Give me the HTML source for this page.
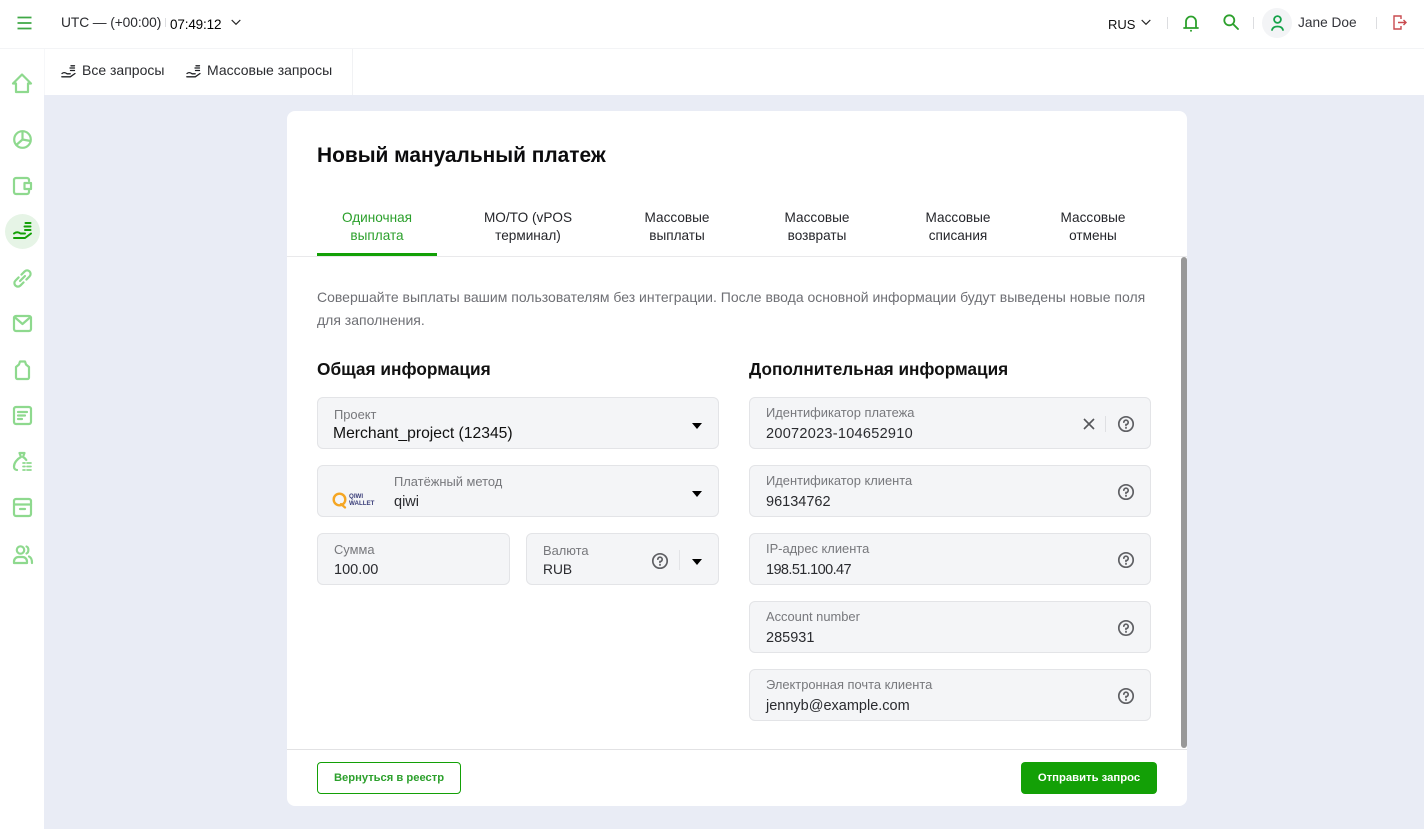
<!DOCTYPE html>
<html lang="ru">
<head>
<meta charset="utf-8">
<title>Новый мануальный платеж</title>
<style>
html,body{margin:0;padding:0}
body{width:1424px;height:829px;overflow:hidden;background:#e9ecf5;position:relative;font-family:"Liberation Sans","Noto Sans CJK SC",sans-serif;color:#1f2024}
.a{position:absolute;white-space:nowrap}
.bar{position:absolute;background:#fff}
.sep{position:absolute;width:1px;background:#dcdde0}
.f{position:absolute;box-sizing:border-box;background:#f4f5f7;border:1px solid #e3e4e7;border-radius:6px;height:52px}
.l{position:absolute;font-size:12.9px;line-height:16px;color:#77787c;white-space:nowrap}
.v{position:absolute;font-size:14.5px;line-height:18px;color:#2a2b2f;white-space:nowrap}
.tab{position:absolute;top:209px;font-size:13.6px;line-height:18px;text-align:center;color:#24252a;white-space:nowrap;transform:translateX(-50%)}
svg{position:absolute;overflow:visible}
.ic{fill:none;stroke:#8ed98e;stroke-width:2.2;stroke-linecap:round;stroke-linejoin:round}
.q{fill:none;stroke:#5f6064;stroke-width:1.7;stroke-linecap:round}
.hand{fill:none;stroke:#1f2024;stroke-width:1.3;stroke-linecap:round;stroke-linejoin:round}
.caret{position:absolute;width:0;height:0;border-left:5px solid transparent;border-right:5px solid transparent;border-top:6px solid #000}
</style>
</head>
<body>

<!-- top bar -->
<div class="bar" style="left:0;top:0;width:1424px;height:48px"></div>
<div class="bar" style="left:0;top:48px;width:1424px;height:1px;background:#f3f4f6"></div>
<svg style="left:17px;top:16px" width="15" height="14" viewBox="0 0 15 14"><path d="M.5 1.500h14M.5 7h14M.5 12.500h14" fill="none" stroke="#3fa845" stroke-width="1.800"/></svg>
<div class="a" style="left:61px;top:14px;font-size:13.8px;line-height:17px;color:#2a2b2f;letter-spacing:-.1px">UTC — (+00:00)</div>
<div class="sep" style="left:165px;top:18px;height:9px"></div>
<div class="a" style="left:170px;top:16px;font-size:13.5px;line-height:17px;color:#000;letter-spacing:-.15px">07:49:12</div>
<svg style="left:231px;top:19px" width="10" height="7" viewBox="0 0 10 7"><path d="M.7 1l4.300 4.300L9.300 1" fill="none" stroke="#222" stroke-width="1.200"/></svg>

<div class="a" style="left:1108px;top:16px;font-size:13px;line-height:17px;color:#111">RUS</div>
<svg style="left:1141px;top:19px" width="10" height="7" viewBox="0 0 10 7"><path d="M.7 1l4.300 4.300L9.300 1" fill="none" stroke="#222" stroke-width="1.200"/></svg>
<div class="sep" style="left:1167px;top:17px;height:12px"></div>
<svg style="left:1183px;top:14px" width="16" height="18" viewBox="0 0 16 18"><path d="M1 14h14M3 14V7.500a5 5 0 0 1 10 0V14" fill="none" stroke="#2ca02c" stroke-width="1.800" stroke-linecap="round"/><circle cx="8" cy="16.800" r="1" fill="#2ca02c"/></svg>
<svg style="left:1223px;top:14px" width="16" height="16" viewBox="0 0 16 16"><circle cx="6.300" cy="6.300" r="5" fill="none" stroke="#2ca02c" stroke-width="1.800"/><path d="M10 10l5 5" stroke="#2ca02c" stroke-width="1.900" stroke-linecap="round"/></svg>
<div class="sep" style="left:1253px;top:17px;height:12px"></div>
<div class="a" style="left:1262px;top:8px;width:30px;height:30px;border-radius:50%;background:#f3f4f6"></div>
<svg style="left:1271px;top:15px" width="13" height="16" viewBox="0 0 13 16"><circle cx="6.500" cy="4.500" r="3.400" fill="none" stroke="#16a34a" stroke-width="1.800"/><path d="M1 15c.6-2.500 2.700-3.500 5.500-3.500S11.400 12.500 12 15" fill="none" stroke="#16a34a" stroke-width="1.800" stroke-linecap="round"/></svg>
<div class="a" style="left:1298px;top:14px;font-size:13.7px;line-height:17px;color:#33343a">Jane Doe</div>
<div class="sep" style="left:1376px;top:17px;height:12px"></div>
<svg style="left:1393px;top:15px" width="14" height="15" viewBox="0 0 14 15"><path d="M8 4V1H1v13h7v-3" fill="none" stroke="#c94a4f" stroke-width="1.400"/><path d="M5 7.500h8M10.500 5l2.500 2.500-2.500 2.500" fill="none" stroke="#c94a4f" stroke-width="1.400"/></svg>

<!-- sidebar -->
<div class="bar" style="left:0;top:49px;width:44px;height:780px"></div>

<!-- sub nav -->
<div class="bar" style="left:44px;top:49px;width:1380px;height:46px"></div>
<div class="a" style="left:44px;top:49px;width:1px;height:46px;background:#f6f7f9"></div>
<div class="a" style="left:352px;top:49px;width:1px;height:46px;background:#f1f2f4"></div>
<svg style="left:61px;top:65px" width="15" height="13" viewBox="0 0 15 13"><path class="hand" d="M1 8.500c2-1.500 3.500-1 5 .3h3.200M.8 11.800h8.500L14 8.500M9 3h4.500M9.500 5.500h4M10 .8h3.500"/></svg>
<div class="a" style="left:82px;top:62px;font-size:14px;line-height:17px;color:#2a2b2f">Все запросы</div>
<svg style="left:186px;top:65px" width="15" height="13" viewBox="0 0 15 13"><path class="hand" d="M1 8.500c2-1.500 3.500-1 5 .3h3.200M.8 11.800h8.500L14 8.500M9 3h4.500M9.500 5.500h4M10 .8h3.500"/></svg>
<div class="a" style="left:207px;top:62px;font-size:14px;line-height:17px;color:#2a2b2f">Массовые запросы</div>

<!-- sidebar icons -->
<svg class="ic" style="left:12px;top:73px" width="20" height="20" viewBox="0 0 20 20"><path d="M1 10.500L10 1.500l9 9h-3V19H4v-8.500z"/></svg>
<svg class="ic" style="left:13px;top:130px" width="19" height="19" viewBox="0 0 19 19"><circle cx="9.500" cy="9.500" r="8.300"/><path d="M9.500 1.500v8l8 1.500M9.500 9.500L3.300 15"/></svg>
<svg class="ic" style="left:13px;top:177px" width="19" height="18" viewBox="0 0 19 18"><path d="M16 4V3a2 2 0 0 0-2-2H3a2 2 0 0 0-2 2v12a2 2 0 0 0 2 2h11a2 2 0 0 0 2-2v-2"/><path d="M11.500 6h6.500v6h-6.500z"/></svg>
<div class="a" style="left:5px;top:214px;width:35px;height:35px;border-radius:50%;background:#e6f4e6"></div>
<svg style="left:13px;top:222px" width="19" height="18" viewBox="0 0 19 18"><path d="M1 11.500c2.500-2 4.500-1.500 6.500 0H12M1 16h11l6-4.500M11.500 4.500h6M12 8h5.500M12.500 1h5" fill="none" stroke="#13a006" stroke-width="2" stroke-linecap="round" stroke-linejoin="round"/></svg>
<svg class="ic" style="left:13px;top:269px" width="19" height="19" viewBox="0 0 19 19"><g transform="rotate(-45 9.500 9.500)"><path d="M7.500 6H3a3.500 3.500 0 0 0 0 7h4.500M11.500 6H16a3.500 3.500 0 0 1 0 7h-4.500M6 9.500h7"/></g></svg>
<svg class="ic" style="left:13px;top:315px" width="19" height="17" viewBox="0 0 19 17"><rect x="1" y="1" width="17" height="15" rx="2"/><path d="M1.500 2l8 7 8-7"/></svg>
<svg class="ic" style="left:15px;top:360px" width="15" height="20" viewBox="0 0 15 20"><path d="M5 1.500h5l1 3 3 2.500v10.500a1.500 1.500 0 0 1-1.500 1.500h-10A1.500 1.500 0 0 1 1 17.500V7l3-2.500z"/></svg>
<svg class="ic" style="left:13px;top:406px" width="19" height="19" viewBox="0 0 19 19"><rect x="1" y="1" width="17" height="17" rx="2"/><path d="M5 6h9M5 9.500h7M5 13h4"/></svg>
<svg class="ic" style="left:13px;top:452px" width="20" height="19" viewBox="0 0 20 19"><path d="M6.500 1h5l-1.500 4c1.500.8 2.500 1.800 3.300 3M6.500 1L8 5C4 7 1 11 1 14.500c0 2 1 3.500 3 3.500"/><path d="M10 11h2M14 11h4M10 14.500h2M14 14.500h4M10 18h2M14 18h4" stroke-width="1.700"/></svg>
<svg class="ic" style="left:13px;top:498px" width="19" height="19" viewBox="0 0 19 19"><rect x="1" y="1" width="17" height="17" rx="2"/><path d="M1 6.500h17M7 11h5"/></svg>
<svg class="ic" style="left:13px;top:545px" width="20" height="19" viewBox="0 0 20 19"><circle cx="7.500" cy="5" r="3.700"/><path d="M1 18v-1.500A4.500 4.500 0 0 1 5.500 12h4a4.500 4.500 0 0 1 4.500 4.500V18zM13.500 1.500c2.500.8 2.500 6 0 7M16 11.500c2 .8 3 2.500 3 6.500"/></svg>

<!-- card -->
<div class="a" style="left:287px;top:111px;width:900px;height:695px;background:#fff;border-radius:8px"></div>
<div class="a" style="left:317px;top:144px;font-size:20.9px;line-height:24px;font-weight:700;color:#0b0b0d">Новый мануальный платеж</div>

<div class="tab" style="left:377px;color:#2ca02c">Одиночная<br>выплата</div>
<div class="tab" style="left:528px">MO/TO (vPOS<br>терминал)</div>
<div class="tab" style="left:677px">Массовые<br>выплаты</div>
<div class="tab" style="left:817px">Массовые<br>возвраты</div>
<div class="tab" style="left:958px">Массовые<br>списания</div>
<div class="tab" style="left:1093px">Массовые<br>отмены</div>
<div class="a" style="left:287px;top:256px;width:900px;height:1px;background:#e9e9eb"></div>
<div class="a" style="left:317px;top:253px;width:120px;height:3px;background:#13a006"></div>

<div class="a" style="left:1181px;top:257px;width:6px;height:491px;background:#989898;border-radius:3px"></div>

<div class="a" style="left:317px;top:286px;font-size:14px;line-height:22.500px;color:#6e6f74">Совершайте выплаты вашим пользователям без интеграции. После ввода основной информации будут выведены новые поля<br>для заполнения.</div>

<div class="a" style="left:317px;top:359px;font-size:17.300px;line-height:21px;font-weight:700;color:#111">Общая информация</div>
<div class="a" style="left:749px;top:359px;font-size:17.200px;line-height:21px;font-weight:700;color:#111">Дополнительная информация</div>

<!-- left fields -->
<div class="f" style="left:317px;top:397px;width:402px"></div>
<div class="l" style="left:334px;top:407px">Проект</div>
<div class="v" style="left:333px;top:425px;color:#111;font-size:15.700px">Merchant_project (12345)</div>
<div class="caret" style="left:692px;top:423px"></div>

<div class="f" style="left:317px;top:465px;width:402px"></div>
<div class="l" style="left:394px;top:474px">Платёжный метод</div>
<div class="v" style="left:394px;top:493px">qiwi</div>
<div class="caret" style="left:692px;top:491px"></div>
<svg style="left:332px;top:492px" width="16" height="17" viewBox="0 0 16 17"><circle cx="7.500" cy="7.500" r="5.800" fill="none" stroke="#f5a623" stroke-width="2.400"/><path d="M9 12l4 3.500" stroke="#f5a623" stroke-width="2.200" stroke-linecap="round"/></svg>
<div class="a" style="left:349px;top:493px;font-size:6.200px;line-height:7px;font-weight:700;color:#3b3f7a">QIWI<br>WALLET</div>

<div class="f" style="left:317px;top:533px;width:193px"></div>
<div class="l" style="left:334px;top:542px">Сумма</div>
<div class="v" style="left:334px;top:561px">100.00</div>

<div class="f" style="left:526px;top:533px;width:193px"></div>
<div class="l" style="left:543px;top:543px">Валюта</div>
<div class="v" style="left:543px;top:561px;font-size:13.800px">RUB</div>
<svg class="q" style="left:652px;top:553px" width="16" height="16" viewBox="0 0 16 16"><circle cx="8" cy="8" r="7.200"/><path d="M5.800 6.200A2.200 2.200 0 1 1 8 8.600v.9"/><circle cx="8" cy="11.900" r=".5" stroke-width="1"/></svg>
<div class="sep" style="left:679px;top:550px;height:20px;background:#e3e4e7"></div>
<div class="caret" style="left:692px;top:559px"></div>

<!-- right fields -->
<div class="f" style="left:749px;top:397px;width:402px"></div>
<div class="l" style="left:766px;top:405px">Идентификатор платежа</div>
<div class="v" style="left:766px;top:425px;letter-spacing:.28px">20072023-104652910</div>
<svg style="left:1083px;top:418px" width="12" height="12" viewBox="0 0 12 12"><path d="M1 1l10 10M11 1L1 11" stroke="#55565a" stroke-width="1.600"/></svg>
<div class="sep" style="left:1105px;top:416px;height:16px;background:#dfe0e3"></div>
<svg class="q" style="left:1118px;top:416px" width="16" height="16" viewBox="0 0 16 16"><circle cx="8" cy="8" r="7.200"/><path d="M5.800 6.200A2.200 2.200 0 1 1 8 8.600v.9"/><circle cx="8" cy="11.900" r=".5" stroke-width="1"/></svg>

<div class="f" style="left:749px;top:465px;width:402px"></div>
<div class="l" style="left:766px;top:473px">Идентификатор клиента</div>
<div class="v" style="left:766px;top:493px">96134762</div>
<svg class="q" style="left:1118px;top:484px" width="16" height="16" viewBox="0 0 16 16"><circle cx="8" cy="8" r="7.200"/><path d="M5.800 6.200A2.200 2.200 0 1 1 8 8.600v.9"/><circle cx="8" cy="11.900" r=".5" stroke-width="1"/></svg>

<div class="f" style="left:749px;top:533px;width:402px"></div>
<div class="l" style="left:766px;top:541px">IP-адрес клиента</div>
<div class="v" style="left:766px;top:561px;letter-spacing:-.6px">198.51.100.47</div>
<svg class="q" style="left:1118px;top:552px" width="16" height="16" viewBox="0 0 16 16"><circle cx="8" cy="8" r="7.200"/><path d="M5.800 6.200A2.200 2.200 0 1 1 8 8.600v.9"/><circle cx="8" cy="11.900" r=".5" stroke-width="1"/></svg>

<div class="f" style="left:749px;top:601px;width:402px"></div>
<div class="l" style="left:766px;top:609px">Account number</div>
<div class="v" style="left:766px;top:629px">285931</div>
<svg class="q" style="left:1118px;top:620px" width="16" height="16" viewBox="0 0 16 16"><circle cx="8" cy="8" r="7.200"/><path d="M5.800 6.200A2.200 2.200 0 1 1 8 8.600v.9"/><circle cx="8" cy="11.900" r=".5" stroke-width="1"/></svg>

<div class="f" style="left:749px;top:669px;width:402px"></div>
<div class="l" style="left:766px;top:677px">Электронная почта клиента</div>
<div class="v" style="left:766px;top:697px">jennyb@example.com</div>
<svg class="q" style="left:1118px;top:688px" width="16" height="16" viewBox="0 0 16 16"><circle cx="8" cy="8" r="7.200"/><path d="M5.800 6.200A2.200 2.200 0 1 1 8 8.600v.9"/><circle cx="8" cy="11.900" r=".5" stroke-width="1"/></svg>

<!-- footer -->
<div class="a" style="left:287px;top:749px;width:900px;height:1px;background:#e2e2e4"></div>
<div class="a" style="left:317px;top:762px;width:144px;height:32px;box-sizing:border-box;border:1px solid #13a006;border-radius:4px;text-align:center;font-size:11.200px;line-height:30px;font-weight:700;color:#2ca02c">Вернуться в реестр</div>
<div class="a" style="left:1021px;top:762px;width:136px;height:32px;background:#13a006;border-radius:4px;text-align:center;font-size:11.300px;line-height:32px;font-weight:700;color:#fff">Отправить запрос</div>

</body>
</html>
